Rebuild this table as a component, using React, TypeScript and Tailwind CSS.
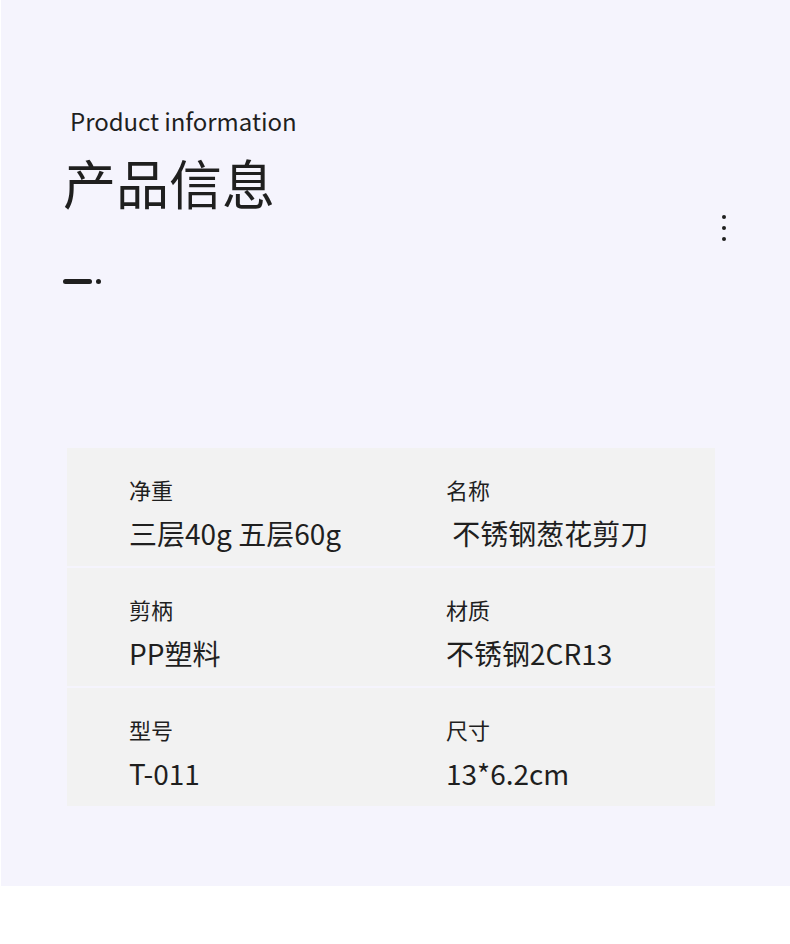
import React from "react";

const ROWS = [
  [
    { label: "净重", value: "三层40g 五层60g" },
    { label: "名称", value: " 不锈钢葱花剪刀" },
  ],
  [
    { label: "剪柄", value: "PP塑料" },
    { label: "材质", value: "不锈钢2CR13" },
  ],
  [
    { label: "型号", value: "T-011" },
    { label: "尺寸", value: "13*6.2cm" },
  ],
];

export default function App() {
  return (
    <div className="w-[790px] h-[944px] bg-white font-['Noto_Sans_CJK_SC','Noto_Sans',sans-serif] text-[#1f1f1f]">
      <div className="ml-[1px] h-[886px] bg-[#f5f4fd] relative">
        <div className="pt-[104px] pl-[69px]">
          <p className="text-[24px] leading-[34px] tracking-[-0.05px]">Product information</p>
        </div>
        <h1 className="pl-[62px] mt-[14px] text-[53px] leading-[60px]">产品信息</h1>

        {/* kebab */}
        <div className="absolute left-[721px] top-[215px] flex flex-col gap-[7px]">
          <span className="w-[4px] h-[4px] rounded-full bg-[#1f1f1f]" />
          <span className="w-[4px] h-[4px] rounded-full bg-[#1f1f1f]" />
          <span className="w-[4px] h-[4px] rounded-full bg-[#1f1f1f]" />
        </div>

        <div className="flex items-center gap-[4px] pl-[62px] mt-[67px]">
          <span className="w-[29px] h-[5px] rounded-full bg-[#1f1f1f]" />
          <span className="w-[5px] h-[5px] rounded-full bg-[#1f1f1f]" />
        </div>

        <div className="mt-[164px] ml-[66px] w-[648px] flex flex-col gap-[2px]">
          {ROWS.map((row, i) => (
            <div key={i} className="h-[118px] bg-[#f2f2f2] grid grid-cols-[317px_1fr] pl-[62px] pt-[25px]">
              {row.map((c) => (
                <div key={c.label}>
                  <div className="text-[22px] leading-[32px]">{c.label}</div>
                  <div className="text-[28px] leading-[40px] mt-[8px] whitespace-pre">{c.value}</div>
                </div>
              ))}
            </div>
          ))}
        </div>
      </div>
    </div>
  );
}
